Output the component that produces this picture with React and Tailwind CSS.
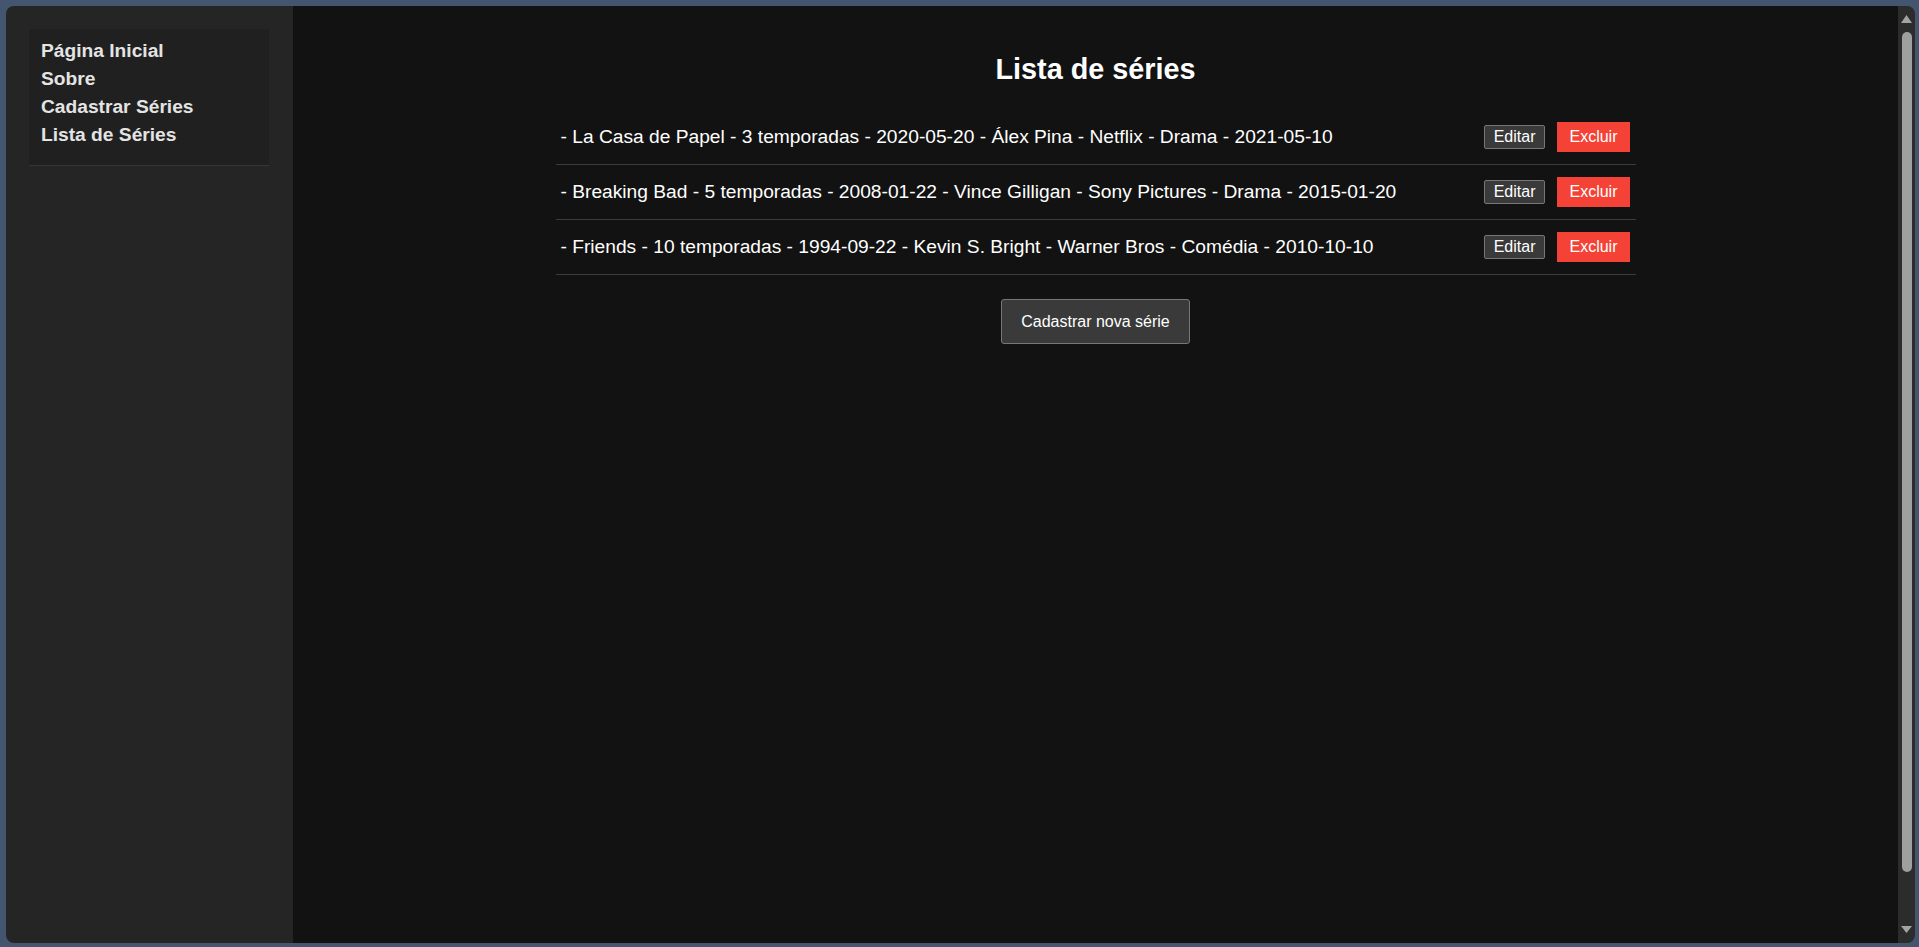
const series = [
  "- La Casa de Papel - 3 temporadas - 2020-05-20 - Álex Pina - Netflix - Drama - 2021-05-10",
  "- Breaking Bad - 5 temporadas - 2008-01-22 - Vince Gilligan - Sony Pictures - Drama - 2015-01-20",
  "- Friends - 10 temporadas - 1994-09-22 - Kevin S. Bright - Warner Bros - Comédia - 2010-10-10",
];

const links = ["Página Inicial", "Sobre", "Cadastrar Séries", "Lista de Séries"];

export default function App() {
  return (
    <div
      className="h-screen w-full bg-[#44556f] pt-[6px] pl-[6px] pr-[4px] pb-[4px]"
      style={{ fontFamily: '"Liberation Sans", Arial, sans-serif' }}
    >
      <div className="flex h-full overflow-hidden rounded-lg">
        {/* Sidebar */}
        <aside className="w-[287px] shrink-0 bg-[#252525] pt-[23px] pl-[23px] pr-[24px]">
          <nav className="bg-[#202020] border-b border-[#363636] pt-2 pb-4 pl-3">
            {links.map((l) => (
              <a
                key={l}
                href="#"
                className="block text-[19.2px] leading-[28px] font-bold text-[#e4e4e4]"
              >
                {l}
              </a>
            ))}
          </nav>
        </aside>

        {/* Main */}
        <main className="flex-1 bg-[#121212] pt-[47px]">
          <h2 className="text-center text-[28.8px] leading-[33px] font-bold text-white">
            Lista de séries
          </h2>

          <ul className="mx-auto mt-[24px] w-[1080px]">
            {series.map((s) => (
              <li
                key={s}
                className="flex items-center justify-between border-b border-[#3c3c3c] py-3 pl-[5px] pr-[6px]"
              >
                <span className="text-[19.2px] leading-[22px] text-white">{s}</span>
                <div className="flex items-center gap-3">
                  <button className="rounded-[2px] border border-[#777] bg-[#3a3a3a] px-[9px] py-0.5 text-[16px] leading-[18px] text-white">
                    Editar
                  </button>
                  <button className="bg-[#f44336] px-3 py-1.5 text-[16px] leading-[18px] text-white">
                    Excluir
                  </button>
                </div>
              </li>
            ))}
          </ul>

          <div className="mt-6 flex justify-center">
            <button className="h-[45px] rounded-[3px] border border-[#777] bg-[#3a3a3a] px-[19px] text-[16px] leading-[18px] text-white">
              Cadastrar nova série
            </button>
          </div>
        </main>

        {/* Scrollbar */}
        <div className="flex w-[17px] shrink-0 flex-col items-center bg-[#2c2c2c] pt-[9px] pb-[10px]">
          <svg width="11" height="8" viewBox="0 0 11 8">
            <path d="M5.5 0 L11 8 L0 8 Z" fill="#a3a3a3" />
          </svg>
          <div className="mt-[9px] w-[10px] flex-1 rounded-full bg-[#9f9f9f]" />
          <div className="h-[54px]" />
          <svg width="11" height="7" viewBox="0 0 11 7">
            <path d="M0 0 L11 0 L5.5 7 Z" fill="#a3a3a3" />
          </svg>
        </div>
      </div>
    </div>
  );
}
